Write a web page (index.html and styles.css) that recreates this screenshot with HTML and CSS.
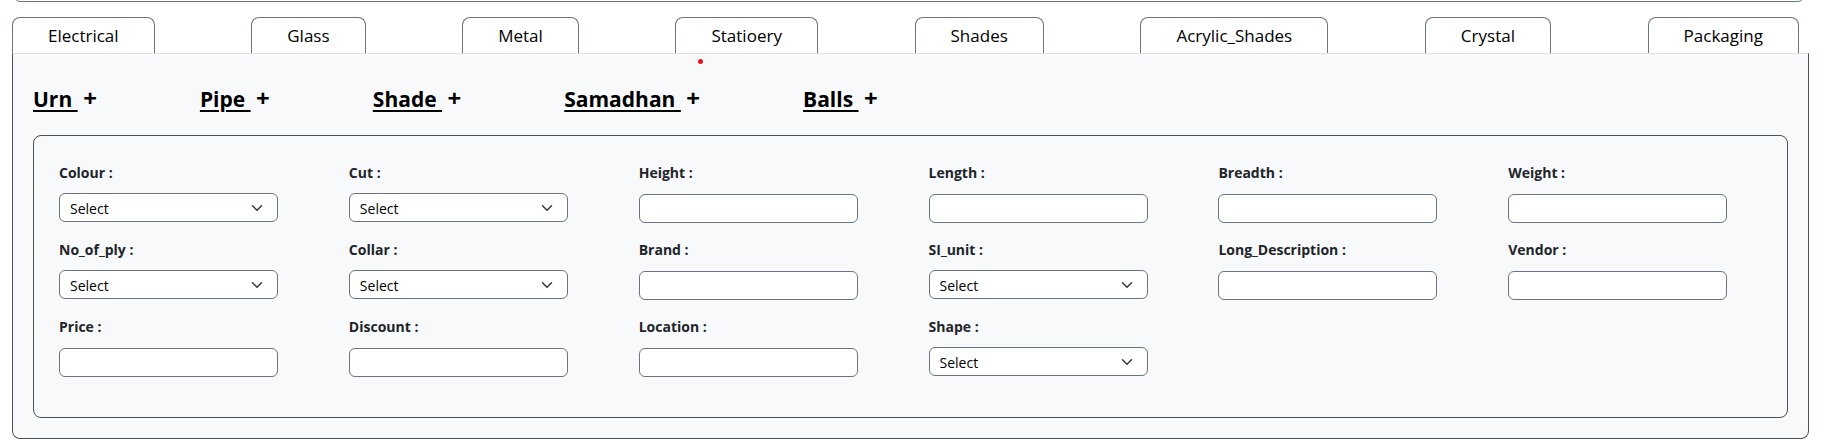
FILE: index.html
```html
<!DOCTYPE html>
<html lang="en">
<head>
<meta charset="utf-8">
<title>Product form</title>
<link rel="stylesheet" href="styles.css">
</head>
<body>
<div class="prev-card"></div>
<nav class="tabs">
  <a class="tab">Electrical</a>
  <a class="tab">Glass</a>
  <a class="tab">Metal</a>
  <a class="tab">Statioery</a>
  <a class="tab">Shades</a>
  <a class="tab">Acrylic_Shades</a>
  <a class="tab">Crystal</a>
  <a class="tab">Packaging</a>
</nav>
<section class="panel">
  <span class="dot"></span>
  <div class="cats">
    <div class="cat"><a class="cat-link">Urn&nbsp;</a> <span class="cat-plus">+</span></div>
    <div class="cat"><a class="cat-link">Pipe&nbsp;</a> <span class="cat-plus">+</span></div>
    <div class="cat"><a class="cat-link">Shade&nbsp;</a> <span class="cat-plus">+</span></div>
    <div class="cat"><a class="cat-link">Samadhan&nbsp;</a> <span class="cat-plus">+</span></div>
    <div class="cat"><a class="cat-link">Balls&nbsp;</a> <span class="cat-plus">+</span></div>
  </div>
  <div class="fields">
    <div class="field"><label>Colour :</label><select class="ctl sel"><option>Select</option></select></div>
    <div class="field"><label>Cut :</label><select class="ctl sel"><option>Select</option></select></div>
    <div class="field"><label>Height :</label><input class="ctl inp" type="text"></div>
    <div class="field"><label>Length :</label><input class="ctl inp" type="text"></div>
    <div class="field"><label>Breadth :</label><input class="ctl inp" type="text"></div>
    <div class="field"><label>Weight :</label><input class="ctl inp" type="text"></div>

    <div class="field"><label>No_of_ply :</label><select class="ctl sel"><option>Select</option></select></div>
    <div class="field"><label>Collar :</label><select class="ctl sel"><option>Select</option></select></div>
    <div class="field"><label>Brand :</label><input class="ctl inp" type="text"></div>
    <div class="field"><label>SI_unit :</label><select class="ctl sel"><option>Select</option></select></div>
    <div class="field"><label>Long_Description :</label><input class="ctl inp" type="text"></div>
    <div class="field"><label>Vendor :</label><input class="ctl inp" type="text"></div>

    <div class="field"><label>Price :</label><input class="ctl inp" type="text"></div>
    <div class="field"><label>Discount :</label><input class="ctl inp" type="text"></div>
    <div class="field"><label>Location :</label><input class="ctl inp" type="text"></div>
    <div class="field"><label>Shape :</label><select class="ctl sel"><option>Select</option></select></div>
  </div>
</section>
</body>
</html>
```
FILE: styles.css
```css
* { box-sizing: border-box; }

html, body {
  margin: 0;
  padding: 0;
  background: #ffffff;
  font-family: "Segoe UI", "Open Sans", "Noto Sans", sans-serif;
  color: #212529;
  overflow: hidden;
}

.prev-card {
  height: 22px;
  margin: -20px 23px 0 14px;
  border: 1px solid #6c757d;
  border-radius: 6px;
}

.tabs {
  display: flex;
  justify-content: space-between;
  margin: 15px 28px 0 12px;
  height: 36px;
}

.tab {
  display: block;
  height: 36px;
  padding: 5px 35px 0;
  border: 1px solid #6c757d;
  border-bottom: none;
  border-radius: 8px 8px 0 0;
  background: #ffffff;
  color: #000000;
  font-size: 17px;
  line-height: 25px;
  white-space: nowrap;
}

.panel {
  position: relative;
  margin: 0 18px 0 12px;
  height: 386px;
  padding: 32px 20px 20px;
  border: 1px solid #495057;
  border-top-color: #dee2e6;
  border-radius: 0 0 8px 8px;
  background: #f8f9fa;
}

.dot {
  position: absolute;
  left: 685px;
  top: 5px;
  width: 5px;
  height: 5px;
  border-radius: 50%;
  background: #e8161b;
}

.cats {
  display: flex;
  gap: 103px;
  height: 24px;
  margin-bottom: 25px;
}

.cat {
  font-size: 21px;
  font-weight: 700;
  line-height: 24px;
  color: #000000;
  white-space: nowrap;
}

.cat-link {
  color: #000000;
  text-decoration: underline;
  text-decoration-thickness: 2px;
  text-underline-offset: 3px;
}

.cat-plus {
  color: #000000;
  font-size: 24px;
}

.fields {
  display: grid;
  grid-template-columns: repeat(6, 219px);
  column-gap: 70.85px;
  row-gap: 16px;
  align-items: start;
  height: 283px;
  padding: 26px 25px 40px;
  border: 1px solid #495057;
  border-radius: 8px;
}

.field {
  display: flex;
  flex-direction: column;
}

.field label {
  display: block;
  font-size: 14px;
  font-weight: 700;
  line-height: 21px;
  margin-bottom: 10px;
  color: #212529;
}

.ctl {
  width: 219px;
  height: 29px;
  margin: 0;
  border: 1px solid #6c757d;
  border-radius: 6px;
  background-color: #ffffff;
  font-family: inherit;
  font-size: 14px;
  color: #000000;
  outline: none;
}

.sel {
  appearance: none;
  -webkit-appearance: none;
  padding: 1px 36px 0 10px;
  background-image: url("data:image/svg+xml,%3csvg xmlns='http://www.w3.org/2000/svg' viewBox='0 0 16 16'%3e%3cpath fill='none' stroke='%23343a40' stroke-linecap='round' stroke-linejoin='round' stroke-width='2' d='m2 5 6 6 6-6'/%3e%3c/svg%3e");
  background-repeat: no-repeat;
  background-position: right 12px center;
  background-size: 16px 12px;
}

.inp {
  margin-top: 1px;
  padding: 0 10px;
}
```
